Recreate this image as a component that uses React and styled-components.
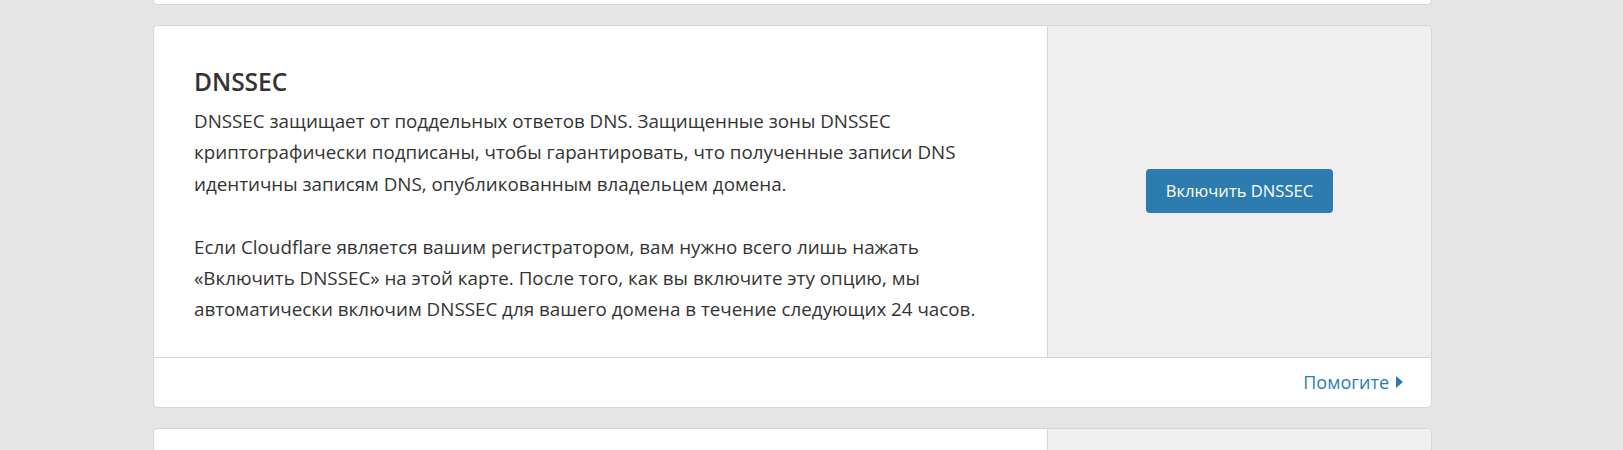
import React from "react";
import styled, { createGlobalStyle } from "styled-components";

const GlobalStyle = createGlobalStyle`
  body {
    margin: 0;
    background: #e5e5e5;
    font-family: "Open Sans", "Noto Sans", sans-serif;
    color: #333;
  }
`;

const Page = styled.div`
  width: 1279px;
  padding-left: 153px;
  height: 450px;
  overflow: hidden;
  display: flex;
  flex-direction: column;
  gap: 20px;
`;

const Card = styled.div`
  background: #fff;
  border: 1px solid #d6d6d6;
  border-radius: 5px;
  overflow: hidden;
  flex-shrink: 0;
`;

const CardTail = styled(Card)`
  height: 4px;
  border-top: none;
  border-radius: 0 0 5px 5px;
`;

const Row = styled.div`
  display: flex;
  min-height: ${(p) => p.$min || 0}px;
`;

const Content = styled.div`
  flex: 1;
  padding: 40px 40px 31px 40px;
`;

const Side = styled.div`
  width: 383px;
  flex-shrink: 0;
  background: #efefef;
  border-left: 1px solid #d6d6d6;
  display: flex;
  align-items: center;
  justify-content: center;
`;

const Title = styled.h3`
  margin: 0 0 9px;
  font-size: 24.5px;
  line-height: 31px;
  font-weight: 600;
  color: #333;
`;

const Text = styled.p`
  margin: 0;
  font-size: 18.8px;
  line-height: 31.4px;
  color: #333;

  & + & {
    margin-top: 31.4px;
  }
`;

const Button = styled.button`
  font-family: inherit;
  font-size: 16.6px;
  line-height: 24px;
  padding: 10px 20px;
  height: 44px;
  border: none;
  border-radius: 4px;
  background: #2d7cb0;
  color: #fff;
  cursor: pointer;
`;

const Footer = styled.div`
  border-top: 1px solid #d6d6d6;
  height: 49px;
  display: flex;
  align-items: center;
  justify-content: flex-end;
  padding-right: 28px;
`;

const HelpLink = styled.a`
  display: flex;
  align-items: center;
  gap: 7px;
  font-size: 18px;
  color: #2d7cb0;
  text-decoration: none;
  cursor: pointer;
`;

const Caret = styled.span`
  width: 0;
  height: 0;
  border-top: 6.5px solid transparent;
  border-bottom: 6.5px solid transparent;
  border-left: 7px solid #2d7cb0;
`;

export default function App() {
  return (
    <>
      <GlobalStyle />
      <Page>
        <CardTail />
        <Card>
          <Row>
            <Content>
              <Title>DNSSEC</Title>
              <Text>
                DNSSEC защищает от поддельных ответов DNS. Защищенные зоны DNSSEC
                <br />
                криптографически подписаны, чтобы гарантировать, что полученные записи DNS
                <br />
                идентичны записям DNS, опубликованным владельцем домена.
              </Text>
              <Text>
                Если Cloudflare является вашим регистратором, вам нужно всего лишь нажать
                <br />
                «Включить DNSSEC» на этой карте. После того, как вы включите эту опцию, мы
                <br />
                автоматически включим DNSSEC для вашего домена в течение следующих 24 часов.
              </Text>
            </Content>
            <Side>
              <Button>Включить DNSSEC</Button>
            </Side>
          </Row>
          <Footer>
            <HelpLink>
              Помогите
              <Caret />
            </HelpLink>
          </Footer>
        </Card>
        <Card>
          <Row $min={60}>
            <Content />
            <Side />
          </Row>
        </Card>
      </Page>
    </>
  );
}
